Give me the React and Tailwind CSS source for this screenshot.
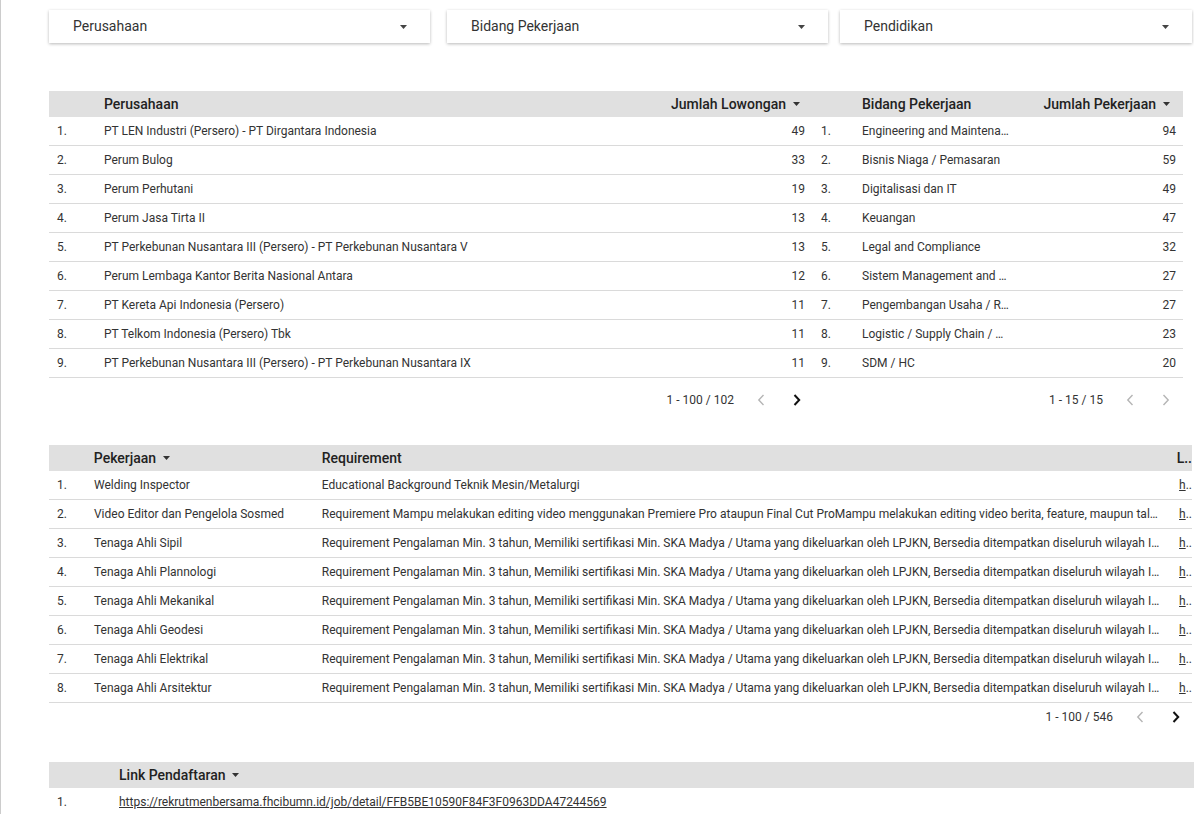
import React from "react";

const SortArrow = () => (
  <svg width="7" height="4" viewBox="0 0 7 4" className="ml-[7px] inline-block">
    <path d="M0 0 L7 0 L3.5 4 Z" fill="#333" />
  </svg>
);

const DropArrow = () => (
  <svg width="7" height="4" viewBox="0 0 7 4">
    <path d="M0 0 L7 0 L3.5 4 Z" fill="#444" />
  </svg>
);

const Chevron = ({ dir, active }) => (
  <svg width="8" height="12" viewBox="0 0 8 12">
    <path
      d={dir === "left" ? "M6.5 1 L1.8 6 L6.5 11" : "M1.5 1 L6.2 6 L1.5 11"}
      fill="none"
      stroke={active ? "#111" : "#b5b5b5"}
      strokeWidth={active ? 2 : 1.4}
    />
  </svg>
);

const Pager = ({ label, nextActive }) => (
  <div className="flex items-center text-[12px] text-[#333]">
    <span>{label}</span>
    <span className="ml-[22px] flex w-[10px] justify-center">
      <Chevron dir="left" active={false} />
    </span>
    <span className="ml-[26px] flex w-[10px] justify-center">
      <Chevron dir="right" active={nextActive} />
    </span>
  </div>
);

const Filter = ({ label, className }) => (
  <div
    className={
      "flex h-[33px] items-center justify-between bg-white pl-[24px] pr-[23px] text-[14px] text-[#333] shadow-[0_1px_3px_rgba(0,0,0,0.28)] " +
      className
    }
  >
    <span>{label}</span>
    <DropArrow />
  </div>
);

const perusahaan = [
  ["PT LEN Industri (Persero) - PT Dirgantara Indonesia", 49],
  ["Perum Bulog", 33],
  ["Perum Perhutani", 19],
  ["Perum Jasa Tirta II", 13],
  ["PT Perkebunan Nusantara III (Persero) - PT Perkebunan Nusantara V", 13],
  ["Perum Lembaga Kantor Berita Nasional Antara", 12],
  ["PT Kereta Api Indonesia (Persero)", 11],
  ["PT Telkom Indonesia (Persero) Tbk", 11],
  ["PT Perkebunan Nusantara III (Persero) - PT Perkebunan Nusantara IX", 11],
];

const bidang = [
  ["Engineering and Maintena…", 94],
  ["Bisnis Niaga / Pemasaran", 59],
  ["Digitalisasi dan IT", 49],
  ["Keuangan", 47],
  ["Legal and Compliance", 32],
  ["Sistem Management and …", 27],
  ["Pengembangan Usaha / R…", 27],
  ["Logistic / Supply Chain / …", 23],
  ["SDM / HC", 20],
];

const REQ =
  "Requirement Pengalaman Min. 3 tahun, Memiliki sertifikasi Min. SKA Madya / Utama yang dikeluarkan oleh LPJKN, Bersedia ditempatkan diseluruh wilayah I…";

const pekerjaan = [
  ["Welding Inspector", "Educational Background Teknik Mesin/Metalurgi"],
  [
    "Video Editor dan Pengelola Sosmed",
    "Requirement Mampu melakukan editing video menggunakan Premiere Pro ataupun Final Cut ProMampu melakukan editing video berita, feature, maupun tal…",
  ],
  ["Tenaga Ahli Sipil", REQ],
  ["Tenaga Ahli Plannologi", REQ],
  ["Tenaga Ahli Mekanikal", REQ],
  ["Tenaga Ahli Geodesi", REQ],
  ["Tenaga Ahli Elektrikal", REQ],
  ["Tenaga Ahli Arsitektur", REQ],
];

export default function App() {
  return (
    <div
      className="h-[814px] w-[1194px] overflow-hidden border-l border-[#cccccc] bg-white text-[#333]"
      style={{ fontFamily: "Roboto, 'Noto Sans', sans-serif" }}
    >
      <div className="w-[1300px] pl-[48px] pt-[10px]">
        {/* Filters */}
        <div className="flex">
          <Filter label="Perusahaan" className="w-[381px]" />
          <Filter label="Bidang Pekerjaan" className="ml-[17px] w-[381px]" />
          <Filter label="Pendidikan" className="ml-[12px] w-[352px]" />
        </div>

        {/* Top tables */}
        <div className="mt-[48px] flex">
          {/* Table 1 */}
          <div className="w-[763px]">
            <div className="flex h-[26px] items-center bg-[#e0e0e0] text-[14px] font-medium text-[#222]">
              <div className="w-[55px]" />
              <div className="flex-1">Perusahaan</div>
              <div className="flex items-center pr-[12px]">
                Jumlah Lowongan
                <SortArrow />
              </div>
            </div>
            {perusahaan.map(([name, n], i) => (
              <div
                key={i}
                className="flex h-[29px] items-center border-b border-[#dadada] text-[12px] text-[#333]"
              >
                <div className="w-[55px] pl-[8px]">{i + 1}.</div>
                <div className="flex-1 whitespace-nowrap">{name}</div>
                <div className="pr-[7px]">{n}</div>
              </div>
            ))}
            <div className="flex h-[44px] items-center justify-end pr-[10px]">
              <Pager label="1 - 100 / 102" nextActive={true} />
            </div>
          </div>
          {/* Table 2 */}
          <div className="w-[371px]">
            <div className="flex h-[26px] items-center bg-[#e0e0e0] text-[14px] font-medium text-[#222]">
              <div className="w-[50px]" />
              <div className="flex-1">Bidang Pekerjaan</div>
              <div className="flex items-center pr-[13px]">
                Jumlah Pekerjaan
                <SortArrow />
              </div>
            </div>
            {bidang.map(([name, n], i) => (
              <div
                key={i}
                className="flex h-[29px] items-center border-b border-[#dadada] text-[12px] text-[#333]"
              >
                <div className="w-[50px] pl-[9px]">{i + 1}.</div>
                <div className="flex-1 whitespace-nowrap">{name}</div>
                <div className="pr-[7px]">{n}</div>
              </div>
            ))}
            <div className="flex h-[44px] items-center justify-end pr-[12px]">
              <Pager label="1 - 15 / 15" nextActive={false} />
            </div>
          </div>
        </div>

        {/* Table 3 */}
        <div className="mt-[23px] w-[1143px]">
          <div className="flex h-[26px] items-center bg-[#e0e0e0] text-[14px] font-medium text-[#222]">
            <div className="w-[45px]" />
            <div className="flex w-[228px] items-center">
              Pekerjaan
              <SortArrow />
            </div>
            <div className="w-[858px] pl-[1px]">Requirement</div>
            <div className="whitespace-nowrap pl-[2px]">L..</div>
          </div>
          {pekerjaan.map(([job, req], i) => (
            <div
              key={i}
              className="flex h-[29px] items-center border-b border-[#dadada] text-[12px] text-[#333] last:border-b-0"
            >
              <div className="w-[45px] pl-[8px]">{i + 1}.</div>
              <div className="w-[228px] whitespace-nowrap">{job}</div>
              <div className="w-[858px] overflow-hidden whitespace-nowrap">{req}</div>
              <div className="whitespace-nowrap">
                <span className="underline">h</span>..
              </div>
            </div>
          ))}
          <div className="flex h-[28px] items-center justify-end pr-[11px]">
            <Pager label="1 - 100 / 546" nextActive={true} />
          </div>
        </div>

        {/* Table 4 */}
        <div className="mt-[31px] w-[1200px]">
          <div className="flex h-[26px] items-center bg-[#e0e0e0] text-[14px] font-medium text-[#222]">
            <div className="w-[70px]" />
            <div className="flex items-center">
              Link Pendaftaran
              <SortArrow />
            </div>
          </div>
          <div className="flex h-[28px] items-center text-[12px] text-[#333]">
            <div className="w-[70px] pl-[8px]">1.</div>
            <div className="underline">
              https://rekrutmenbersama.fhcibumn.id/job/detail/FFB5BE10590F84F3F0963DDA47244569
            </div>
          </div>
        </div>
      </div>
    </div>
  );
}
